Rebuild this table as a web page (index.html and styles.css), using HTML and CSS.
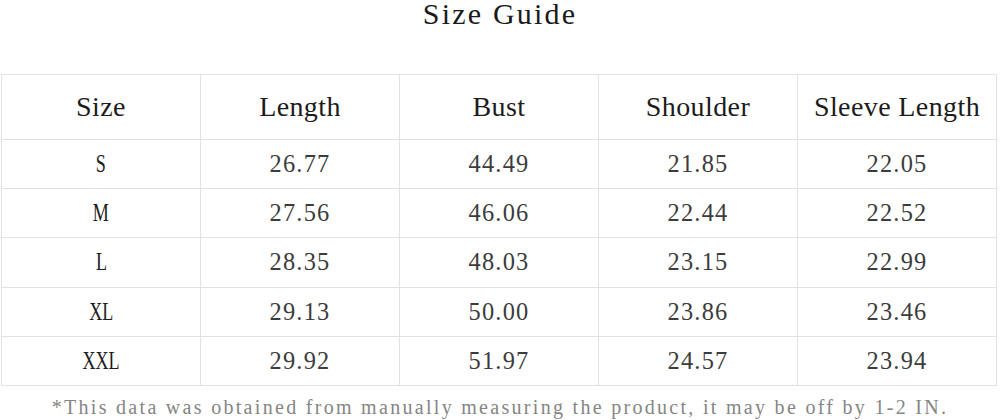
FILE: index.html
```html
<!DOCTYPE html>
<html>
<head>
<meta charset="utf-8">
<link rel="stylesheet" href="styles.css">
</head>
<body>
<div class="page">
  <h1 class="title">Size Guide</h1>
  <div class="table">
    <div class="cell head">Size</div>
    <div class="cell head">Length</div>
    <div class="cell head">Bust</div>
    <div class="cell head">Shoulder</div>
    <div class="cell head">Sleeve Length</div>

    <div class="cell size"><span class="sz">S</span></div>
    <div class="cell">26.77</div>
    <div class="cell">44.49</div>
    <div class="cell">21.85</div>
    <div class="cell">22.05</div>

    <div class="cell size"><span class="sz">M</span></div>
    <div class="cell">27.56</div>
    <div class="cell">46.06</div>
    <div class="cell">22.44</div>
    <div class="cell">22.52</div>

    <div class="cell size"><span class="sz">L</span></div>
    <div class="cell">28.35</div>
    <div class="cell">48.03</div>
    <div class="cell">23.15</div>
    <div class="cell">22.99</div>

    <div class="cell size"><span class="sz">XL</span></div>
    <div class="cell">29.13</div>
    <div class="cell">50.00</div>
    <div class="cell">23.86</div>
    <div class="cell">23.46</div>

    <div class="cell size"><span class="sz">XXL</span></div>
    <div class="cell">29.92</div>
    <div class="cell">51.97</div>
    <div class="cell">24.57</div>
    <div class="cell">23.94</div>
  </div>
  <p class="note">*This data was obtained from manually measuring the product, it may be off by 1-2 IN.</p>
</div>
</body>
</html>
```

FILE: styles.css
```css
html, body {
  margin: 0;
  padding: 0;
  background: #ffffff;
}

.page {
  width: 1000px;
  height: 420px;
  overflow: hidden;
  font-family: "Liberation Serif", "Times New Roman", serif;
}

.title {
  margin: 0;
  height: 74px;
  line-height: 28px;
  text-align: center;
  font-size: 30px;
  font-weight: normal;
  letter-spacing: 2.2px;
  color: #1a1a1a;
}

.table {
  margin-left: 1px;
  width: 996px;
  display: grid;
  grid-template-columns: repeat(5, 1fr);
  grid-template-rows: 65px repeat(5, 49.2px);
  border-top: 1px solid #e2e2e2;
  border-left: 1px solid #e2e2e2;
  box-sizing: border-box;
}

.cell {
  display: flex;
  align-items: center;
  justify-content: center;
  border-right: 1px solid #e2e2e2;
  border-bottom: 1px solid #e2e2e2;
  font-size: 24.4px;
  letter-spacing: 1.2px;
  color: #3c3c3c;
}

.cell.head {
  font-size: 28px;
  letter-spacing: 0.4px;
  color: #1c1c1c;
}

.cell.size {
  color: #1c1c1c;
  letter-spacing: 0;
}

.sz {
  display: inline-block;
  transform: scaleX(0.74);
}

.note {
  margin: 0;
  padding-top: 6px;
  line-height: 30px;
  text-align: center;
  font-size: 20px;
  letter-spacing: 2.3px;
  color: #858585;
  white-space: nowrap;
}
```
